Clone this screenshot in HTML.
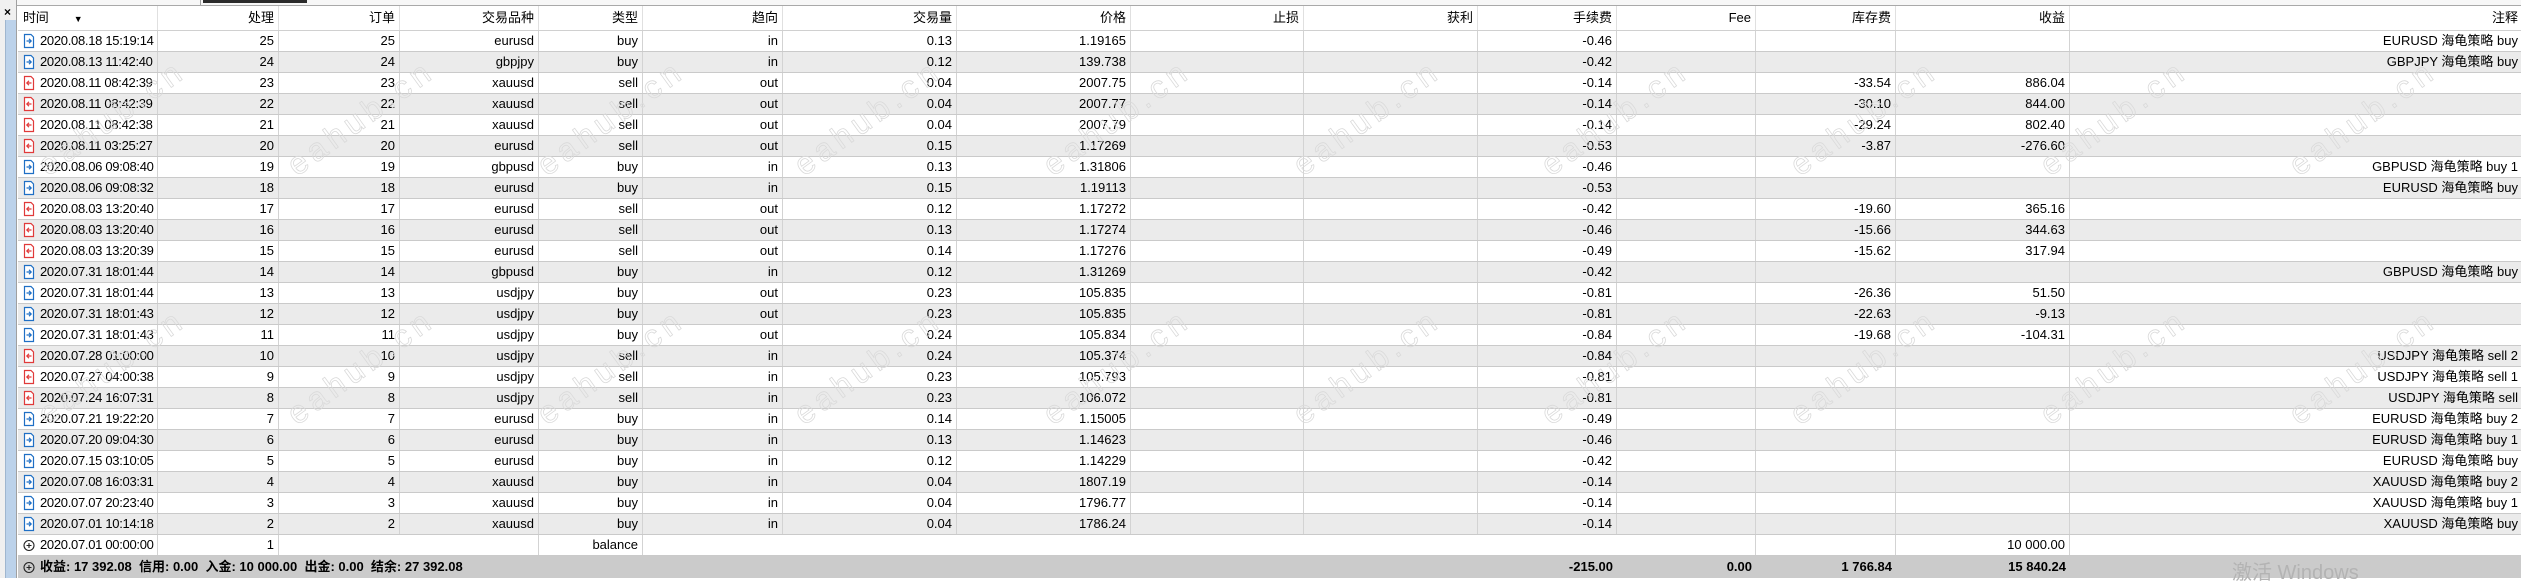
<!DOCTYPE html>
<html><head><meta charset="utf-8">
<style>
*{margin:0;padding:0;box-sizing:border-box}
html,body{width:2521px;height:578px;overflow:hidden;background:#fff;font-family:"Liberation Sans","Noto Sans CJK SC",sans-serif;font-size:13px;color:#000}
#side{position:absolute;left:0;top:0;width:17px;height:578px;background:#f0f0f0;border-right:1px solid #a0a0a0}
#side .x{position:absolute;left:4px;top:5px;font-size:12px;font-weight:bold}
#side .b{position:absolute;left:5px;top:20px;width:11px;height:558px;background:#bcd2ea;border-left:1px solid #9fb6cf}
#top{position:absolute;left:17px;top:0;width:2504px;height:6px;background:#f7f7f7;border-bottom:1px solid #a9a9a9}
#top .t{position:absolute;left:186px;top:0;width:104px;height:3px;background:#2b2b2b}
#top .s{position:absolute;left:183px;top:0;width:1px;height:5px;background:#a0a0a0}
#tbl{position:absolute;left:18px;top:6px;width:2503px}
.r{display:grid;grid-template-columns:140px 121px 121px 139px 104px 140px 174px 174px 173px 174px 139px 139px 140px 174px 460px;height:21px;border-bottom:1px solid #cacaca;line-height:20px;white-space:nowrap}
.r.g{background:#ebebeb}
.r>div{border-right:1px solid #d3d3d3;text-align:right;padding-right:4px;overflow:hidden}
.r>div:first-child{text-align:left;padding-left:5px;padding-right:0;letter-spacing:-0.3px}
.r>div:last-child{border-right:none;padding-right:12px}
.h{height:25px;line-height:24px;border-bottom:1px solid #d0d0d0}
.h>div{border-right:1px solid #e0e0e0}
.ic{display:inline-block;vertical-align:middle;width:12px;height:16px;margin-right:5px;position:relative;top:-1px}
.f{background:#cbcbcb;font-weight:bold;border-bottom:none;height:22px;line-height:21px}
.f>div{border-right:none}
.f>div:first-child{letter-spacing:0}
#wm{position:absolute;left:0;top:0;pointer-events:none}
#act{position:absolute;left:2232px;top:556px;font-size:20px;color:#b3b3b3;font-family:"Liberation Sans","Noto Sans CJK SC",sans-serif}
</style></head><body>
<div id="top"><div class="s"></div><div class="t"></div></div>
<div id="side"><div class="x">×</div><div class="b"></div></div>
<svg width="0" height="0" style="position:absolute">
<defs>
<symbol id="bi" viewBox="0 0 12 16"><path d="M1.5 1.5H8L10.5 4V14.5H1.5Z" fill="#fff" stroke="#1f6fc5" stroke-width="1.2"/><path d="M3.5 8H8M6 5.8L8.2 8L6 10.2" fill="none" stroke="#1f6fc5" stroke-width="1.2"/></symbol>
<symbol id="si" viewBox="0 0 12 16"><path d="M1.5 1.5H8L10.5 4V14.5H1.5Z" fill="#fff" stroke="#e03a3a" stroke-width="1.2"/><path d="M8.5 8H4M6 5.8L3.8 8L6 10.2" fill="none" stroke="#e03a3a" stroke-width="1.2"/></symbol>
<symbol id="pi" viewBox="0 0 12 16"><circle cx="6" cy="8.5" r="5" fill="none" stroke="#222" stroke-width="1.1"/><path d="M3.5 8.5H8.5M6 6V11" stroke="#222" stroke-width="1.1"/></symbol>
</defs></svg>
<div id="tbl">
<div class="r h"><div>时间 <span style="margin-left:22px;font-size:9px">▼</span></div><div>处理</div><div>订单</div><div>交易品种</div><div>类型</div><div>趋向</div><div>交易量</div><div>价格</div><div>止损</div><div>获利</div><div>手续费</div><div>Fee</div><div>库存费</div><div>收益</div><div>注释</div></div>
<div class="r"><div><svg class="ic"><use href="#bi"/></svg>2020.08.18 15:19:14</div><div>25</div><div>25</div><div>eurusd</div><div>buy</div><div>in</div><div>0.13</div><div>1.19165</div><div></div><div></div><div>-0.46</div><div></div><div></div><div></div><div>EURUSD 海龟策略 buy</div></div>
<div class="r g"><div><svg class="ic"><use href="#bi"/></svg>2020.08.13 11:42:40</div><div>24</div><div>24</div><div>gbpjpy</div><div>buy</div><div>in</div><div>0.12</div><div>139.738</div><div></div><div></div><div>-0.42</div><div></div><div></div><div></div><div>GBPJPY 海龟策略 buy</div></div>
<div class="r"><div><svg class="ic"><use href="#si"/></svg>2020.08.11 08:42:39</div><div>23</div><div>23</div><div>xauusd</div><div>sell</div><div>out</div><div>0.04</div><div>2007.75</div><div></div><div></div><div>-0.14</div><div></div><div>-33.54</div><div>886.04</div><div></div></div>
<div class="r g"><div><svg class="ic"><use href="#si"/></svg>2020.08.11 08:42:39</div><div>22</div><div>22</div><div>xauusd</div><div>sell</div><div>out</div><div>0.04</div><div>2007.77</div><div></div><div></div><div>-0.14</div><div></div><div>-30.10</div><div>844.00</div><div></div></div>
<div class="r"><div><svg class="ic"><use href="#si"/></svg>2020.08.11 08:42:38</div><div>21</div><div>21</div><div>xauusd</div><div>sell</div><div>out</div><div>0.04</div><div>2007.79</div><div></div><div></div><div>-0.14</div><div></div><div>-29.24</div><div>802.40</div><div></div></div>
<div class="r g"><div><svg class="ic"><use href="#si"/></svg>2020.08.11 03:25:27</div><div>20</div><div>20</div><div>eurusd</div><div>sell</div><div>out</div><div>0.15</div><div>1.17269</div><div></div><div></div><div>-0.53</div><div></div><div>-3.87</div><div>-276.60</div><div></div></div>
<div class="r"><div><svg class="ic"><use href="#bi"/></svg>2020.08.06 09:08:40</div><div>19</div><div>19</div><div>gbpusd</div><div>buy</div><div>in</div><div>0.13</div><div>1.31806</div><div></div><div></div><div>-0.46</div><div></div><div></div><div></div><div>GBPUSD 海龟策略 buy 1</div></div>
<div class="r g"><div><svg class="ic"><use href="#bi"/></svg>2020.08.06 09:08:32</div><div>18</div><div>18</div><div>eurusd</div><div>buy</div><div>in</div><div>0.15</div><div>1.19113</div><div></div><div></div><div>-0.53</div><div></div><div></div><div></div><div>EURUSD 海龟策略 buy</div></div>
<div class="r"><div><svg class="ic"><use href="#si"/></svg>2020.08.03 13:20:40</div><div>17</div><div>17</div><div>eurusd</div><div>sell</div><div>out</div><div>0.12</div><div>1.17272</div><div></div><div></div><div>-0.42</div><div></div><div>-19.60</div><div>365.16</div><div></div></div>
<div class="r g"><div><svg class="ic"><use href="#si"/></svg>2020.08.03 13:20:40</div><div>16</div><div>16</div><div>eurusd</div><div>sell</div><div>out</div><div>0.13</div><div>1.17274</div><div></div><div></div><div>-0.46</div><div></div><div>-15.66</div><div>344.63</div><div></div></div>
<div class="r"><div><svg class="ic"><use href="#si"/></svg>2020.08.03 13:20:39</div><div>15</div><div>15</div><div>eurusd</div><div>sell</div><div>out</div><div>0.14</div><div>1.17276</div><div></div><div></div><div>-0.49</div><div></div><div>-15.62</div><div>317.94</div><div></div></div>
<div class="r g"><div><svg class="ic"><use href="#bi"/></svg>2020.07.31 18:01:44</div><div>14</div><div>14</div><div>gbpusd</div><div>buy</div><div>in</div><div>0.12</div><div>1.31269</div><div></div><div></div><div>-0.42</div><div></div><div></div><div></div><div>GBPUSD 海龟策略 buy</div></div>
<div class="r"><div><svg class="ic"><use href="#bi"/></svg>2020.07.31 18:01:44</div><div>13</div><div>13</div><div>usdjpy</div><div>buy</div><div>out</div><div>0.23</div><div>105.835</div><div></div><div></div><div>-0.81</div><div></div><div>-26.36</div><div>51.50</div><div></div></div>
<div class="r g"><div><svg class="ic"><use href="#bi"/></svg>2020.07.31 18:01:43</div><div>12</div><div>12</div><div>usdjpy</div><div>buy</div><div>out</div><div>0.23</div><div>105.835</div><div></div><div></div><div>-0.81</div><div></div><div>-22.63</div><div>-9.13</div><div></div></div>
<div class="r"><div><svg class="ic"><use href="#bi"/></svg>2020.07.31 18:01:43</div><div>11</div><div>11</div><div>usdjpy</div><div>buy</div><div>out</div><div>0.24</div><div>105.834</div><div></div><div></div><div>-0.84</div><div></div><div>-19.68</div><div>-104.31</div><div></div></div>
<div class="r g"><div><svg class="ic"><use href="#si"/></svg>2020.07.28 01:00:00</div><div>10</div><div>10</div><div>usdjpy</div><div>sell</div><div>in</div><div>0.24</div><div>105.374</div><div></div><div></div><div>-0.84</div><div></div><div></div><div></div><div>USDJPY 海龟策略 sell 2</div></div>
<div class="r"><div><svg class="ic"><use href="#si"/></svg>2020.07.27 04:00:38</div><div>9</div><div>9</div><div>usdjpy</div><div>sell</div><div>in</div><div>0.23</div><div>105.793</div><div></div><div></div><div>-0.81</div><div></div><div></div><div></div><div>USDJPY 海龟策略 sell 1</div></div>
<div class="r g"><div><svg class="ic"><use href="#si"/></svg>2020.07.24 16:07:31</div><div>8</div><div>8</div><div>usdjpy</div><div>sell</div><div>in</div><div>0.23</div><div>106.072</div><div></div><div></div><div>-0.81</div><div></div><div></div><div></div><div>USDJPY 海龟策略 sell</div></div>
<div class="r"><div><svg class="ic"><use href="#bi"/></svg>2020.07.21 19:22:20</div><div>7</div><div>7</div><div>eurusd</div><div>buy</div><div>in</div><div>0.14</div><div>1.15005</div><div></div><div></div><div>-0.49</div><div></div><div></div><div></div><div>EURUSD 海龟策略 buy 2</div></div>
<div class="r g"><div><svg class="ic"><use href="#bi"/></svg>2020.07.20 09:04:30</div><div>6</div><div>6</div><div>eurusd</div><div>buy</div><div>in</div><div>0.13</div><div>1.14623</div><div></div><div></div><div>-0.46</div><div></div><div></div><div></div><div>EURUSD 海龟策略 buy 1</div></div>
<div class="r"><div><svg class="ic"><use href="#bi"/></svg>2020.07.15 03:10:05</div><div>5</div><div>5</div><div>eurusd</div><div>buy</div><div>in</div><div>0.12</div><div>1.14229</div><div></div><div></div><div>-0.42</div><div></div><div></div><div></div><div>EURUSD 海龟策略 buy</div></div>
<div class="r g"><div><svg class="ic"><use href="#bi"/></svg>2020.07.08 16:03:31</div><div>4</div><div>4</div><div>xauusd</div><div>buy</div><div>in</div><div>0.04</div><div>1807.19</div><div></div><div></div><div>-0.14</div><div></div><div></div><div></div><div>XAUUSD 海龟策略 buy 2</div></div>
<div class="r"><div><svg class="ic"><use href="#bi"/></svg>2020.07.07 20:23:40</div><div>3</div><div>3</div><div>xauusd</div><div>buy</div><div>in</div><div>0.04</div><div>1796.77</div><div></div><div></div><div>-0.14</div><div></div><div></div><div></div><div>XAUUSD 海龟策略 buy 1</div></div>
<div class="r g"><div><svg class="ic"><use href="#bi"/></svg>2020.07.01 10:14:18</div><div>2</div><div>2</div><div>xauusd</div><div>buy</div><div>in</div><div>0.04</div><div>1786.24</div><div></div><div></div><div>-0.14</div><div></div><div></div><div></div><div>XAUUSD 海龟策略 buy</div></div>
<div class="r"><div><svg class="ic"><use href="#pi"/></svg>2020.07.01 00:00:00</div><div>1</div><div style="border-right:none"></div><div></div><div>balance</div><div style="border-right:none"></div><div style="border-right:none"></div><div style="border-right:none"></div><div style="border-right:none"></div><div style="border-right:none"></div><div style="border-right:none"></div><div></div><div></div><div>10 000.00</div><div></div></div>
<div class="r f"><div style="overflow:visible"><svg class="ic"><use href="#pi"/></svg>收益: 17 392.08&nbsp; 信用: 0.00&nbsp; 入金: 10 000.00&nbsp; 出金: 0.00&nbsp; 结余: 27 392.08</div><div></div><div></div><div></div><div></div><div></div><div></div><div></div><div></div><div></div><div>-215.00</div><div>0.00</div><div>1 766.84</div><div>15 840.24</div><div></div></div>
</div>
<svg id="wm" width="2521" height="578" font-family="Liberation Sans, sans-serif" font-size="32" fill="none" stroke="#dadada" stroke-width="0.8">
<g>
<text transform="translate(48,177) rotate(-36)" textLength="168">eahub.cn</text>
<text transform="translate(297,177) rotate(-36)" textLength="168">eahub.cn</text>
<text transform="translate(547,177) rotate(-36)" textLength="168">eahub.cn</text>
<text transform="translate(804,177) rotate(-36)" textLength="168">eahub.cn</text>
<text transform="translate(1053,177) rotate(-36)" textLength="168">eahub.cn</text>
<text transform="translate(1303,177) rotate(-36)" textLength="168">eahub.cn</text>
<text transform="translate(1551,177) rotate(-36)" textLength="168">eahub.cn</text>
<text transform="translate(1800,177) rotate(-36)" textLength="168">eahub.cn</text>
<text transform="translate(2050,177) rotate(-36)" textLength="168">eahub.cn</text>
<text transform="translate(2299,177) rotate(-36)" textLength="168">eahub.cn</text>
<text transform="translate(48,426) rotate(-36)" textLength="168">eahub.cn</text>
<text transform="translate(297,426) rotate(-36)" textLength="168">eahub.cn</text>
<text transform="translate(547,426) rotate(-36)" textLength="168">eahub.cn</text>
<text transform="translate(804,426) rotate(-36)" textLength="168">eahub.cn</text>
<text transform="translate(1053,426) rotate(-36)" textLength="168">eahub.cn</text>
<text transform="translate(1303,426) rotate(-36)" textLength="168">eahub.cn</text>
<text transform="translate(1551,426) rotate(-36)" textLength="168">eahub.cn</text>
<text transform="translate(1800,426) rotate(-36)" textLength="168">eahub.cn</text>
<text transform="translate(2050,426) rotate(-36)" textLength="168">eahub.cn</text>
<text transform="translate(2299,426) rotate(-36)" textLength="168">eahub.cn</text>
</g></svg>
<div id="act">激活 Windows</div>
</body></html>
